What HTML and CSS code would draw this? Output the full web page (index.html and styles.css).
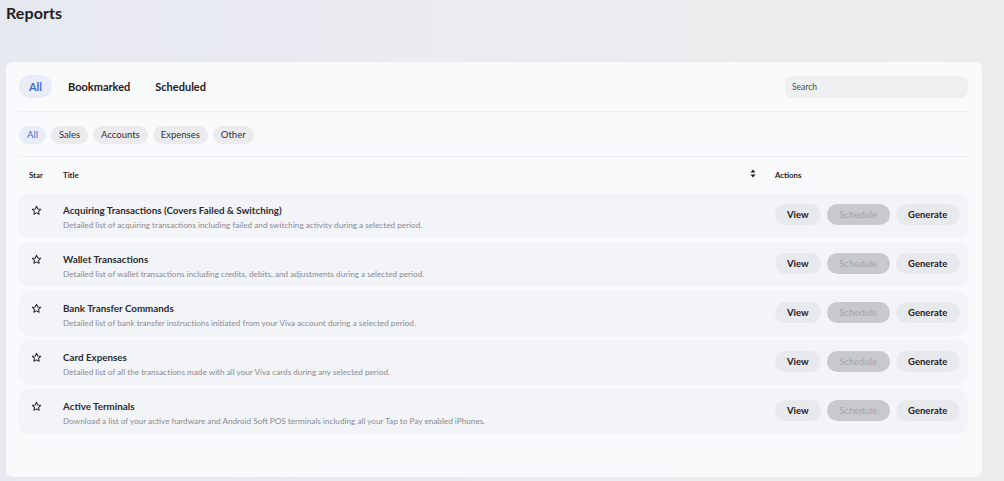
FILE: index.html
```html
<!DOCTYPE html>
<html lang="en">
<head>
<meta charset="utf-8">
<title>Reports</title>
<link rel="stylesheet" href="styles.css">
</head>
<body>
  <h1 class="page-title">Reports</h1>

  <main class="card">
    <div class="topbar">
      <nav class="tabs">
        <button class="tab tab-active">All</button>
        <button class="tab">Bookmarked</button>
        <button class="tab">Scheduled</button>
      </nav>
      <div class="search">Search</div>
    </div>

    <div class="chips">
      <span class="chip chip-active">All</span>
      <span class="chip">Sales</span>
      <span class="chip">Accounts</span>
      <span class="chip">Expenses</span>
      <span class="chip">Other</span>
    </div>

    <div class="table">
      <div class="thead">
        <div class="th th-star">Star</div>
        <div class="th th-title">
          <span>Title</span>
          <svg class="sort" width="6" height="9" viewBox="0 0 6 9"><path d="M3 0.5L5.5 3.5H0.5Z M3 8.5L5.5 5.5H0.5Z" fill="#222"/></svg>
        </div>
        <div class="th th-actions">Actions</div>
      </div>

      <div class="row">
        <div class="cell-star"><svg class="star" viewBox="0 0 24 24"><path d="M12 2.8l2.8 5.9 6.4.8-4.7 4.4 1.2 6.4L12 17.2l-5.7 3.1 1.2-6.4-4.7-4.4 6.4-.8z"/></svg></div>
        <div class="cell-title">
          <div class="r-title">Acquiring Transactions (Covers Failed &amp; Switching)</div>
          <div class="r-desc">Detailed list of acquiring transactions including failed and switching activity during a selected period.</div>
        </div>
        <div class="cell-actions">
          <button class="btn">View</button>
          <button class="btn btn-disabled">Schedule</button>
          <button class="btn">Generate</button>
        </div>
      </div>

      <div class="row">
        <div class="cell-star"><svg class="star" viewBox="0 0 24 24"><path d="M12 2.8l2.8 5.9 6.4.8-4.7 4.4 1.2 6.4L12 17.2l-5.7 3.1 1.2-6.4-4.7-4.4 6.4-.8z"/></svg></div>
        <div class="cell-title">
          <div class="r-title">Wallet Transactions</div>
          <div class="r-desc">Detailed list of wallet transactions including credits, debits, and adjustments during a selected period.</div>
        </div>
        <div class="cell-actions">
          <button class="btn">View</button>
          <button class="btn btn-disabled">Schedule</button>
          <button class="btn">Generate</button>
        </div>
      </div>

      <div class="row">
        <div class="cell-star"><svg class="star" viewBox="0 0 24 24"><path d="M12 2.8l2.8 5.9 6.4.8-4.7 4.4 1.2 6.4L12 17.2l-5.7 3.1 1.2-6.4-4.7-4.4 6.4-.8z"/></svg></div>
        <div class="cell-title">
          <div class="r-title">Bank Transfer Commands</div>
          <div class="r-desc">Detailed list of bank transfer instructions initiated from your Viva account during a selected period.</div>
        </div>
        <div class="cell-actions">
          <button class="btn">View</button>
          <button class="btn btn-disabled">Schedule</button>
          <button class="btn">Generate</button>
        </div>
      </div>

      <div class="row">
        <div class="cell-star"><svg class="star" viewBox="0 0 24 24"><path d="M12 2.8l2.8 5.9 6.4.8-4.7 4.4 1.2 6.4L12 17.2l-5.7 3.1 1.2-6.4-4.7-4.4 6.4-.8z"/></svg></div>
        <div class="cell-title">
          <div class="r-title">Card Expenses</div>
          <div class="r-desc">Detailed list of all the transactions made with all your Viva cards during any selected period.</div>
        </div>
        <div class="cell-actions">
          <button class="btn">View</button>
          <button class="btn btn-disabled">Schedule</button>
          <button class="btn">Generate</button>
        </div>
      </div>

      <div class="row">
        <div class="cell-star"><svg class="star" viewBox="0 0 24 24"><path d="M12 2.8l2.8 5.9 6.4.8-4.7 4.4 1.2 6.4L12 17.2l-5.7 3.1 1.2-6.4-4.7-4.4 6.4-.8z"/></svg></div>
        <div class="cell-title">
          <div class="r-title">Active Terminals</div>
          <div class="r-desc">Download a list of your active hardware and Android Soft POS terminals including all your Tap to Pay enabled iPhones.</div>
        </div>
        <div class="cell-actions">
          <button class="btn">View</button>
          <button class="btn btn-disabled">Schedule</button>
          <button class="btn">Generate</button>
        </div>
      </div>
    </div>
  </main>
</body>
</html>
```

FILE: styles.css
```css
* { box-sizing: border-box; }

html, body { height: 100%; }

body {
  margin: 0;
  padding: 0 22px 4px 6px;
  font-family: "Lato", "Noto Sans", sans-serif;
  color: #1f2024;
  background: linear-gradient(90deg, #e7e9f1 0%, #ebecf1 50%, #ecedeb 100%);
  overflow: hidden;
}

.page-title {
  margin: 0;
  padding-top: 3px;
  height: 62px;
  font-size: 16px;
  font-weight: 700;
  letter-spacing: 0.1px;
}

.card {
  background: #f9fafb;
  border-radius: 7px;
  padding: 13px 14px 0 13px;
  height: 415px;
}

/* top tabs + search */
.topbar {
  display: flex;
  align-items: center;
  justify-content: space-between;
  padding-bottom: 13px;
  border-bottom: 1px solid #eceef1;
}

.tabs { display: flex; gap: 4px; }

.tab {
  font: inherit;
  font-size: 11px;
  font-weight: 700;
  color: #1f2024;
  background: none;
  border: 0;
  height: 23px;
  padding: 0 12px;
  border-radius: 12px;
  cursor: pointer;
}
.tab:first-child { padding: 0; width: 33px; }
.tab:nth-child(2) { padding-right: 9px; }
.tab-active { background: #e8edf7; color: #3d6fd6; }

.search {
  width: 183px;
  height: 22px;
  background: #eeeff0;
  border-radius: 8px;
  font-size: 8.5px;
  color: #4a4b50;
  line-height: 23px;
  padding-left: 7px;
}

/* category chips */
.chips {
  display: flex;
  gap: 5px;
  padding: 14px 0 12px;
  border-bottom: 1px solid #eceef1;
}

.chip {
  font-size: 9.5px;
  height: 18px;
  line-height: 18px;
  padding: 0 8px;
  background: #ebebed;
  border-radius: 9px;
  color: #303136;
}
.chip-active { background: #e8edf7; color: #3d6fd6; }

/* table */
.thead,
.row {
  display: grid;
  grid-template-columns: 44px 1fr 193px;
  align-items: center;
}

.thead {
  height: 36px;
  font-size: 7.8px;
  font-weight: 700;
}
.th-star { padding-left: 10px; }
.th-title {
  display: flex;
  justify-content: space-between;
  align-items: center;
  padding-right: 19px;
}
.sort { margin-top: -4px; }

.row {
  height: 45px;
  background: #f3f4f7;
  border-radius: 10px;
  margin-bottom: 4px;
}

.cell-star { display: flex; align-items: flex-start; height: 45px; padding: 12px 0 0 12px; }
.star {
  width: 11px;
  height: 11px;
  fill: none;
  stroke: #2a2b30;
  stroke-width: 2.2;
  stroke-linejoin: round;
}

.cell-title { padding-top: 3px; }
.r-title {
  font-size: 9.8px;
  font-weight: 700;
  color: #2c2d33;
  line-height: 13px;
}
.r-desc {
  font-size: 8.2px;
  color: #8a8b91;
  line-height: 11px;
  margin-top: 3px;
}

.cell-actions {
  display: flex;
  gap: 6px;
  margin-top: -3px;
}

.btn {
  font: inherit;
  font-size: 9.5px;
  font-weight: 700;
  color: #1f2024;
  background: #e8e9ec;
  border: 0;
  height: 21px;
  border-radius: 11px;
  padding: 0 12px;
  min-width: 45px;
  cursor: pointer;
}
.btn:last-child { min-width: 64px; }
.btn-disabled {
  background: #c8c9cd;
  color: #a4a5aa;
  font-weight: 400;
  min-width: 63px;
}
```
